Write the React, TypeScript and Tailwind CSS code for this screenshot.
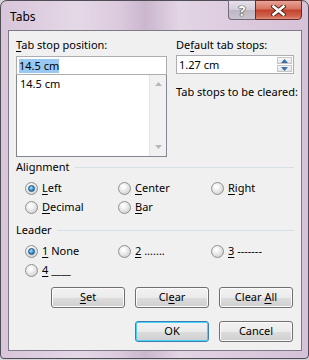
import React from "react";

const font = { fontFamily: '"Noto Sans", "Open Sans", sans-serif' };

const Radio = ({ checked }: { checked?: boolean }) => (
  <span className="w-[13px] h-[13px] rounded-full border border-[#8f9090] bg-[radial-gradient(circle_at_40%_35%,#ffffff_10%,#e2e2e2_55%,#c6c6c6)] flex items-center justify-center shrink-0">
    {checked && (
      <span className="w-[7px] h-[7px] rounded-full border border-[#1b4f7d] bg-[radial-gradient(circle_at_40%_35%,#a6e0ff,#2f8fd0_60%,#0f5a99)]" />
    )}
  </span>
);

const Option = ({
  checked,
  k,
  rest,
}: {
  checked?: boolean;
  k: string;
  rest: string;
}) => (
  <div className="w-[93px] shrink-0 flex items-center gap-[3px]">
    <Radio checked={checked} />
    <span className="ml-[1px] whitespace-pre">
      <span className="underline underline-offset-2">{k}</span>
      {rest}
    </span>
  </div>
);

const Group = ({ title }: { title: string }) => (
  <div className="flex items-center h-[16px]">
    <span>{title}</span>
    <div className="flex-1 h-px bg-[#d5dfe5] ml-[5px]" />
  </div>
);

const Button = ({
  children,
  primary,
}: {
  children: React.ReactNode;
  primary?: boolean;
}) => (
  <button
    className={`w-[74px] h-[21px] rounded-[3px] border ${
      primary
        ? "border-[#3c7fb1] shadow-[inset_0_0_0_1px_#48d3fb]"
        : "border-[#707070] shadow-[inset_0_0_0_1px_#fbfbfb]"
    } bg-[linear-gradient(#f2f2f2,#ebebeb_50%,#dddddd_50%,#cfcfcf)] flex items-center justify-center text-[11px] text-black`}
  >
    <span className="whitespace-pre">{children}</span>
  </button>
);

const Tri = ({ up, color }: { up?: boolean; color: string }) => (
  <svg width="7" height="4" viewBox="0 0 7 4">
    <path d={up ? "M0 4 L3.5 0 L7 4 Z" : "M0 0 L3.5 4 L7 0 Z"} fill={color} />
  </svg>
);

export default function App() {
  return (
    <div className="w-[309px] h-[360px] bg-[#d6d3d8] text-[11px] text-black" style={font}>
      <div className="w-[309px] h-[359px] rounded-t-[7px] rounded-b-[4px] border border-[#4f4d55] bg-[linear-gradient(90deg,#d8c5da,#e4d8e6_25%,#dccbde_38%,#cbb6ce_47%,#e2d5e4_58%,#dcc9de_80%,#d6c2d8)] flex flex-col">
        <div className="h-[29px] flex items-start justify-between">
          <span className="ml-[9px] mt-[8px] text-[12px] leading-[16px]">Tabs</span>
          <div className="flex mr-[6px] -mt-px">
            <div className="w-[27px] h-[20px] rounded-bl-[4px] border border-[#6f6a78] border-r-0 bg-[linear-gradient(#e6e1ea,#d3ccd8_50%,#bdb5c3_50%,#cbc5d0)] flex items-center justify-center text-white font-bold text-[14px] [text-shadow:0_0_1px_#333,0_0_1px_#333,0_0_1px_#333]">
              ?
            </div>
            <div className="w-[47px] h-[20px] rounded-br-[4px] border border-[#6b2a24] bg-[linear-gradient(#e8a397,#d6735f_45%,#c2402b_50%,#d0644e_85%,#e0917f)] flex items-center justify-center">
              <svg width="15" height="11" viewBox="0 0 15 11">
                <path d="M2.5 1.5 L12.5 9.5 M12.5 1.5 L2.5 9.5" stroke="#4b1c16" strokeWidth="4.4" strokeLinecap="square" />
                <path d="M2.5 1.5 L12.5 9.5 M12.5 1.5 L2.5 9.5" stroke="#ffffff" strokeWidth="2.6" strokeLinecap="square" />
              </svg>
            </div>
          </div>
        </div>
        <div className="ml-[7px] mr-[6px] mb-[7px] flex-1 border border-[#7d7a85] bg-[#f0f0f0] px-[7px] pt-[6px] flex flex-col">
          <div className="flex">
            <div className="w-[151px] shrink-0 flex flex-col">
              <div className="h-[16px] leading-[16px] mb-[3px]">
                <span className="underline underline-offset-2">T</span>ab stop position:
              </div>
              <div className="h-[19px] border border-[#abadb3] bg-white flex items-center px-[2px]">
                <span className="bg-[#99c9f3] leading-[14px]">14.5 cm</span>
              </div>
              <div className="h-[82px] border border-t-0 border-[#828790] bg-white flex">
                <div className="flex-1 pl-[3px] pt-[2px] leading-[14px]">14.5 cm</div>
                <div className="w-[17px] bg-[#f1f1f1] border-l border-[#e4e4e4] flex flex-col items-center justify-between py-[7px]">
                  <Tri up color="#b7b7b7" />
                  <Tri color="#b7b7b7" />
                </div>
              </div>
            </div>
            <div className="ml-[9px] flex-1 min-w-0 flex flex-col">
              <div className="h-[16px] leading-[16px] mb-[2px]">
                De<span className="underline underline-offset-2">f</span>ault tab stops:
              </div>
              <div className="h-[19px] border border-[#abadb3] bg-white flex items-center pl-[2px] pr-px">
                <span className="flex-1 leading-[14px]">1.27 cm</span>
                <div className="w-[15px] flex flex-col gap-px">
                  <div className="h-[7px] border border-[#c6c6c6] bg-[linear-gradient(#f7f7f7,#e3e3e3)] flex items-center justify-center">
                    <Tri up color="#3b6ea8" />
                  </div>
                  <div className="h-[7px] border border-[#c6c6c6] bg-[linear-gradient(#f7f7f7,#e3e3e3)] flex items-center justify-center">
                    <Tri color="#3b6ea8" />
                  </div>
                </div>
              </div>
              <div className="mt-[10px] h-[16px] leading-[16px] whitespace-nowrap">
                Tab stops to be cleared:
              </div>
            </div>
          </div>

          <div className="mt-[2px]">
            <Group title="Alignment" />
          </div>
          <div className="pl-[9px] mt-[5px] flex flex-col gap-[3px]">
            <div className="flex h-[16px]">
              <Option checked k="L" rest="eft" />
              <Option k="C" rest="enter" />
              <Option k="R" rest="ight" />
            </div>
            <div className="flex h-[16px]">
              <Option k="D" rest="ecimal" />
              <Option k="B" rest="ar" />
            </div>
          </div>

          <div className="mt-[7px]">
            <Group title="Leader" />
          </div>
          <div className="pl-[9px] mt-[5px] flex flex-col gap-[3px]">
            <div className="flex h-[16px]">
              <Option checked k="1" rest=" None" />
              <Option k="2" rest=" ......." />
              <Option k="3" rest=" -------" />
            </div>
            <div className="flex h-[16px]">
              <Option k="4" rest=" ____" />
            </div>
          </div>

          <div className="mt-[9px] flex justify-end gap-[10px] pr-px">
            <Button>
              <span className="underline underline-offset-2">S</span>et
            </Button>
            <Button>
              Cl<span className="underline underline-offset-2">e</span>ar
            </Button>
            <Button>
              Clear <span className="underline underline-offset-2">A</span>ll
            </Button>
          </div>
          <div className="mt-[13px] flex justify-end gap-[10px] pr-px">
            <Button primary>OK</Button>
            <Button>Cancel</Button>
          </div>
        </div>
      </div>
    </div>
  );
}
